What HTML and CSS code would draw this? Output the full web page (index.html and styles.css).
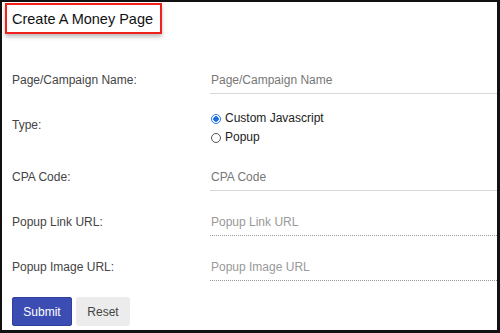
FILE: index.html
```html
<!DOCTYPE html>
<html lang="en">
<head>
    <meta charset="UTF-8">
    <meta name="viewport" content="width=device-width, initial-scale=1.0">
    <link rel="stylesheet" href="styles.css">
    <title>Create A Money Page</title>
</head>
<body>
    <div class="panel">
        <div class="title-box">
            <h1>Create A Money Page</h1>
        </div>
        <form class="money-form">
            <div class="row">
                <label class="label">Page/Campaign Name:</label>
                <input class="field" type="text" placeholder="Page/Campaign Name">
            </div>
            <div class="row type-row">
                <label class="label">Type:</label>
                <div class="radios">
                    <label class="radio"><input type="radio" name="type" checked> Custom Javascript</label>
                    <label class="radio"><input type="radio" name="type"> Popup</label>
                </div>
            </div>
            <div class="row">
                <label class="label">CPA Code:</label>
                <input class="field" type="text" placeholder="CPA Code">
            </div>
            <div class="row">
                <label class="label">Popup Link URL:</label>
                <input class="field dotted" type="text" placeholder="Popup Link URL">
            </div>
            <div class="row">
                <label class="label">Popup Image URL:</label>
                <input class="field dotted" type="text" placeholder="Popup Image URL">
            </div>
            <div class="buttons">
                <button type="button" class="btn submit">Submit</button>
                <button type="reset" class="btn reset">Reset</button>
            </div>
        </form>
    </div>
</body>
</html>
```

FILE: styles.css
```css
html, body {
    margin: 0;
    padding: 0;
    height: 100%;
}

body {
    background-color: #111;
    font-family: "Liberation Sans", Arial, sans-serif;
    padding: 2px 3px 3px 2px;
    box-sizing: border-box;
}

.panel {
    background-color: #fff;
    height: 100%;
    box-sizing: border-box;
    padding: 1px 0 0 10px;
}

/* title with the red highlight box */
.title-box {
    margin-left: -7px;
    width: 157px;
    height: 31px;
    box-sizing: border-box;
    border: 2px solid #f0201c;
    padding: 6px 0 0 5px;
    box-shadow: 0 3px 4px rgba(0, 0, 0, 0.25);
}

.title-box h1 {
    margin: 0;
    font-size: 14.5px;
    font-weight: normal;
    color: #111;
    line-height: 16px;
}

.money-form {
    margin-top: 32px;
    display: flex;
    flex-direction: column;
    gap: 17px;
}

.row {
    display: flex;
    align-items: center;
    height: 28px;
}

.type-row {
    height: 35px;
    align-items: flex-start;
}

.type-row .label {
    padding-top: 7px;
    line-height: 14px;
}

.label {
    width: 198px;
    flex-shrink: 0;
    font-size: 12px;
    color: #444;
}

.field {
    flex: 1;
    height: 28px;
    box-sizing: border-box;
    border: none;
    border-bottom: 1px solid #d8d8d8;
    padding: 0 0 0 1px;
    font-family: "Liberation Sans", Arial, sans-serif;
    font-size: 12px;
    outline: none;
    background: transparent;
}

.field::placeholder {
    color: #777;
}

.field.dotted {
    border-bottom: 1px dotted #999;
}

.field.dotted::placeholder {
    color: #999;
}

.radios {
    display: flex;
    flex-direction: column;
    gap: 6px;
    padding-top: 1px;
}

.radio {
    display: flex;
    align-items: center;
    font-size: 12px;
    color: #222;
    line-height: 13px;
}

.radio input {
    appearance: none;
    -webkit-appearance: none;
    margin: 0 4px 0 1px;
    width: 10px;
    height: 10px;
    border: 1px solid #555;
    border-radius: 50%;
    box-sizing: border-box;
    background: #fff;
}

.radio input:checked {
    border-color: #2b7be4;
    background: radial-gradient(circle, #1f6fe0 0 2.5px, #fff 3px);
}

.buttons {
    display: flex;
    gap: 4px;
    margin-top: -1px;
}

.btn {
    height: 29px;
    border: none;
    border-radius: 3px;
    font-family: "Liberation Sans", Arial, sans-serif;
    font-size: 12px;
    cursor: pointer;
}

.submit {
    width: 60px;
    background-color: #3b4db3;
    color: #fff;
    box-shadow: inset 0 0 0 1px #2f3f9a;
}

.reset {
    width: 54px;
    background-color: #ececec;
    color: #444;
}
```
